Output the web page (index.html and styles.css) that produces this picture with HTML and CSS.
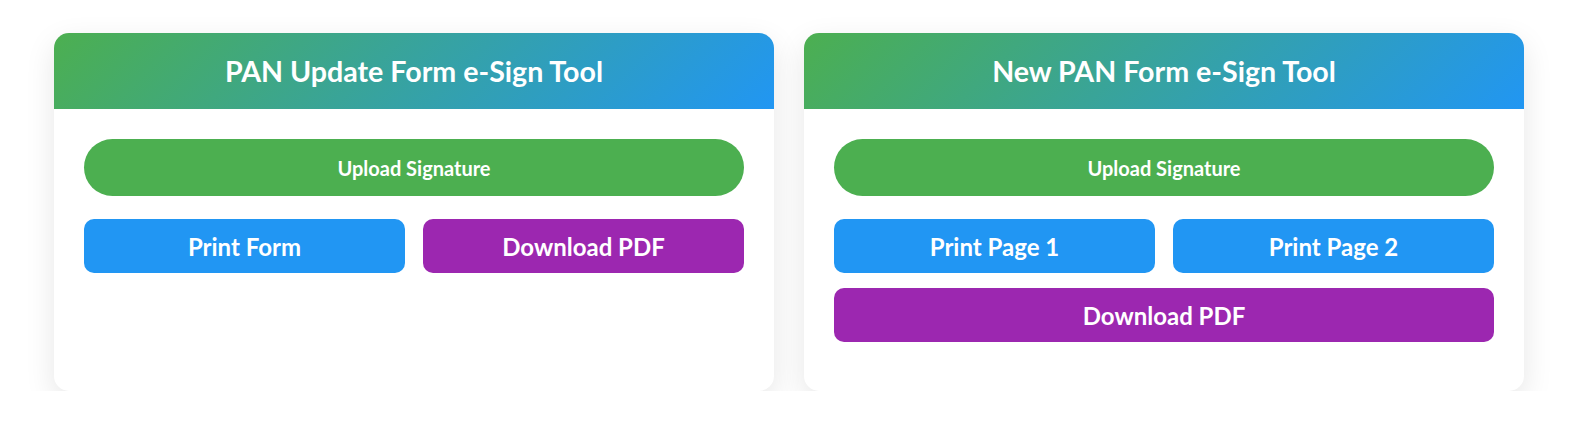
FILE: index.html
```html
<!DOCTYPE html>
<html lang="en">
<head>
<meta charset="utf-8">
<title>PAN e-Sign Tools</title>
<link rel="stylesheet" href="styles.css">
</head>
<body>
<main class="tools">
  <section class="card">
    <header class="card-head"><h2>PAN Update Form e-Sign Tool</h2></header>
    <div class="card-body">
      <button class="btn btn-upload">Upload Signature</button>
      <div class="btn-row">
        <button class="btn btn-print">Print Form</button>
        <button class="btn btn-pdf">Download PDF</button>
      </div>
    </div>
  </section>
  <section class="card">
    <header class="card-head"><h2>New PAN Form e-Sign Tool</h2></header>
    <div class="card-body">
      <button class="btn btn-upload">Upload Signature</button>
      <div class="btn-row">
        <button class="btn btn-print">Print Page 1</button>
        <button class="btn btn-print">Print Page 2</button>
      </div>
      <button class="btn btn-pdf btn-wide">Download PDF</button>
    </div>
  </section>
</main>
</body>
</html>
```
FILE: styles.css
```css
* { box-sizing: border-box; }
body {
  margin: 0;
  background: #ffffff;
  font-family: "Lato", "Open Sans", sans-serif;
}
.tools {
  display: grid;
  grid-template-columns: 720px 720px;
  column-gap: 30px;
  padding: 33px 0 0 54px;
}
.card {
  background: #fff;
  border-radius: 15px;
  overflow: hidden;
  box-shadow: 0 10px 30px rgba(0, 0, 0, 0.1);
  height: 358px;
}
.card-head {
  height: 76px;
  display: flex;
  align-items: center;
  justify-content: center;
  background: linear-gradient(135deg, #4CAF50, #2196F3);
}
.card-head h2 {
  margin: 0;
  color: #fff;
  font-size: 28.6px;
  font-weight: 700;
}
.card-body {
  padding: 30px;
  display: flex;
  flex-direction: column;
}
.btn {
  border: none;
  color: #fff;
  font-family: inherit;
  font-weight: 700;
  cursor: pointer;
}
.btn-upload {
  height: 57px;
  border-radius: 29px;
  background: #4CAF50;
  font-size: 20px;
}
.btn-row {
  margin-top: 23px;
  display: grid;
  grid-template-columns: 1fr 1fr;
  column-gap: 18px;
}
.btn-print, .btn-pdf {
  height: 54px;
  border-radius: 10px;
  font-size: 24px;
}
.btn-print { background: #2196F3; }
.btn-pdf { background: #9C27B0; }
.btn-wide { margin-top: 15px; }
```
